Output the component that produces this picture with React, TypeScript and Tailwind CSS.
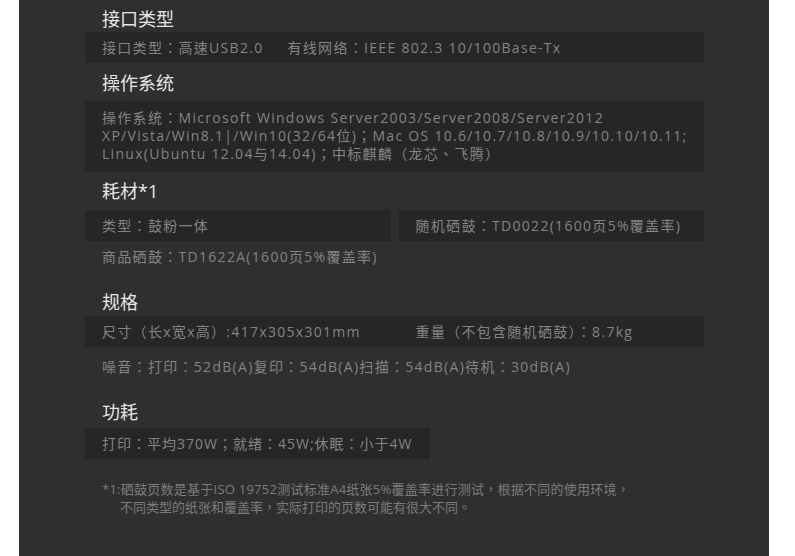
import React from "react";

const box = "bg-[#262626] px-[17px] flex items-center h-[31px]";
const heading = "pl-[17px] leading-[24px] text-[18px] tracking-normal text-[#e6e6e6]";

export default function App() {
  return (
    <div className="min-h-screen bg-white font-['Open_Sans','Noto_Sans_CJK_TC',sans-serif]">
      <div className="ml-[19px] w-[750px] h-[556px] bg-[#2f2f2f] pl-[66px] pr-[65px] overflow-hidden text-[14px] tracking-[1.3px] text-[#848484]">
        {/* 接口类型 */}
        <h2 className={heading + " pt-[7px] mb-[1px]"}>接口类型</h2>
        <div className={box + " gap-[24px] whitespace-nowrap"}>
          <span>接口类型：高速USB2.0</span>
          <span>有线网络：IEEE 802.3 10/100Base-Tx</span>
        </div>

        {/* 操作系统 */}
        <h2 className={heading + " mt-[8px] mb-[6px]"}>操作系统</h2>
        <div className="bg-[#262626] px-[17px] pt-[8px] pb-[9px] leading-[18px] whitespace-nowrap">
          <div>操作系统：Microsoft Windows Server2003/Server2008/Server2012</div>
          <div>XP/Vista/Win8.1|/Win10(32/64位)；Mac OS 10.6/10.7/10.8/10.9/10.10/10.11;</div>
          <div>Linux(Ubuntu 12.04与14.04)；中标麒麟（龙芯、飞腾）</div>
        </div>

        {/* 耗材 */}
        <h2 className={heading + " mt-[7px] mb-[7px]"}>耗材*1</h2>
        <div className="grid grid-cols-2 gap-[8px]">
          <div className={box}>类型：鼓粉一体</div>
          <div className={box + " whitespace-nowrap"}>随机硒鼓：TD0022(1600页5%覆盖率)</div>
        </div>
        <div className="h-[31px] flex items-center pl-[17px]">商品硒鼓：TD1622A(1600页5%覆盖率)</div>

        {/* 规格 */}
        <h2 className={heading + " mt-[18px] mb-[2px]"}>规格</h2>
        <div className="grid grid-cols-2 gap-[8px] bg-[#262626] h-[31px] items-center">
          <div className="pl-[17px] whitespace-nowrap">尺寸（长x宽x高）:417x305x301mm</div>
          <div className="pl-[17px] whitespace-nowrap">重量（不包含随机硒鼓）：8.7kg</div>
        </div>
        <div className="h-[33px] flex items-center pt-[5px] pl-[17px] whitespace-nowrap">
          噪音：打印：52dB(A)复印：54dB(A)扫描：54dB(A)待机：30dB(A)
        </div>

        {/* 功耗 */}
        <h2 className={heading + " mt-[20px] mb-[4px]"}>功耗</h2>
        <div className={box + " w-fit whitespace-nowrap tracking-[1px]"}>打印：平均370W；就绪：45W;休眠：小于4W</div>

        {/* 注释 */}
        <div className="mt-[21px] pl-[17px] text-[13px] leading-[18px] tracking-normal text-[#7c7c7c] whitespace-nowrap">
          <div className="tracking-[0.25px]">*1:硒鼓页数是基于ISO 19752测试标准A4纸张5%覆盖率进行测试，根据不同的使用环境，</div>
          <div className="pl-[18px]">不同类型的纸张和覆盖率，实际打印的页数可能有很大不同。</div>
        </div>
      </div>
    </div>
  );
}
